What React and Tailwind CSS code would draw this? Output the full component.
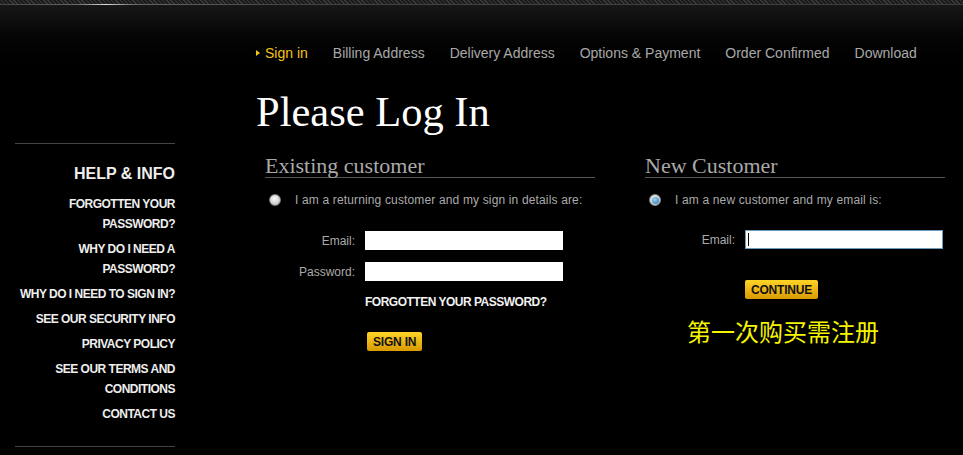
import React from 'react';

const steps = ['Billing Address', 'Delivery Address', 'Options & Payment', 'Order Confirmed', 'Download'];

const helpLinks = [
  'FORGOTTEN YOUR PASSWORD?',
  'WHY DO I NEED A PASSWORD?',
  'WHY DO I NEED TO SIGN IN?',
  'SEE OUR SECURITY INFO',
  'PRIVACY POLICY',
  'SEE OUR TERMS AND CONDITIONS',
  'CONTACT US',
];

const serif = "font-['Liberation_Serif','Times_New_Roman',serif]";

const Radio = ({ checked }) =>
  checked ? (
    <span className="w-[12px] h-[12px] rounded-full bg-[radial-gradient(circle_at_50%_40%,#f4f4f4,#bbb)] border border-[#888] flex items-center justify-center">
      <span className="w-[7px] h-[7px] rounded-full bg-[radial-gradient(circle_at_40%_35%,#9cd3f5,#1f6fb0)]" />
    </span>
  ) : (
    <span className="w-[12px] h-[12px] rounded-full bg-[radial-gradient(circle_at_45%_35%,#fafafa,#b5b5b5)] border border-[#777]" />
  );

const GoldButton = ({ children, className = '' }) => (
  <button className={`h-[19px] px-[6px] rounded-[2px] bg-gradient-to-b from-[#ffd426] to-[#d89a00] text-[#111] font-bold text-[12px] tracking-[-0.2px] leading-none ${className}`}>
    {children}
  </button>
);

const Field = ({ label, focused }) => (
  <div className="flex items-center">
    <label className="w-[100px] pr-[10px] text-right text-[12px] text-[#aaa]">{label}</label>
    <div className={`w-[198px] h-[19px] bg-white flex items-center ${focused ? 'border border-[#6a9cbf]' : ''}`}>
      {focused && <span className="ml-[2px] w-[1px] h-[13px] bg-black" />}
    </div>
  </div>
);

export default function App() {
  return (
    <div className="w-full h-[455px] bg-black overflow-hidden font-['Liberation_Sans',Arial,sans-serif]">
      <div className="h-[4px] bg-[repeating-linear-gradient(45deg,#3a3a3a_0px,#3a3a3a_1px,#1c1c1c_1px,#1c1c1c_3px)]" />
      <div className="h-[1px] bg-[linear-gradient(90deg,#444_0%,#666_8%,#ddd_11%,#666_14%,#444_30%,#3c3c3c_100%)]" />
      <div className="h-[75px] bg-gradient-to-b from-[#171717] to-black pt-[38px] pl-[256px]">
        <nav className="flex items-center gap-[25px] text-[14px] leading-[20px] text-[#a8a8a8]">
          <span className="flex items-center text-[#f5c518]">
            <span className="w-0 h-0 border-y-[3px] border-y-transparent border-l-[4px] border-l-[#f5c518] mr-[5px]" />
            Sign in
          </span>
          {steps.map((s) => (
            <span key={s}>{s}</span>
          ))}
        </nav>
      </div>

      <div className="flex">
        <aside className="w-[175px] pl-[15px] shrink-0 pt-[63px]">
          <div className="border-t border-[#444] pt-[20px] text-right text-[#eee]">
            <h3 className="font-bold text-[16px] leading-[20px]">HELP &amp; INFO</h3>
            <ul className="mt-[10px] flex flex-col gap-[5px] text-[12px] leading-[20px] font-bold tracking-[-0.5px]">
              {helpLinks.map((l) => (
                <li key={l}>{l}</li>
              ))}
            </ul>
            <div className="mt-[22px] border-t border-[#444]" />
          </div>
        </aside>

        <main className="ml-[81px] flex-1">
          <h1 className={`${serif} text-white text-[42.5px] leading-[43px] mt-[10px]`}>Please Log In</h1>

          <div className="flex gap-[50px] mt-[22px] pl-[9px]">
            <section className="w-[330px]">
              <h2 className={`${serif} text-[22px] leading-[22px] text-[#a9a9a9] border-b border-[#555]`}>Existing customer</h2>
              <div className="flex items-center h-[16px] mt-[14px] pl-[4px]">
                <Radio />
                <span className="ml-[14px] text-[12px] text-[#aaa] tracking-[0.15px]">I am a returning customer and my sign in details are:</span>
              </div>
              <div className="mt-[23px] flex flex-col gap-[12px]">
                <Field label="Email:" />
                <Field label="Password:" />
              </div>
              <p className="ml-[100px] mt-[13px] text-[12px] leading-[16px] font-bold text-[#f2f2f2] tracking-[-0.5px]">FORGOTTEN YOUR PASSWORD?</p>
              <GoldButton className="ml-[102px] mt-[22px]">SIGN IN</GoldButton>
            </section>

            <section className="w-[300px]">
              <h2 className={`${serif} text-[22px] leading-[22px] text-[#a9a9a9] border-b border-[#555]`}>New Customer</h2>
              <div className="flex items-center h-[16px] mt-[14px] pl-[4px]">
                <Radio checked />
                <span className="ml-[14px] text-[12px] text-[#aaa] tracking-[0.15px]">I am a new customer and my email is:</span>
              </div>
              <div className="mt-[22px]">
                <Field label="Email:" focused />
              </div>
              <GoldButton className="ml-[100px] mt-[31px]">CONTINUE</GoldButton>
              <p className="ml-[42px] mt-[14px] text-[24px] leading-[32px] text-[#f5f500] font-['Noto_Sans_CJK_SC',sans-serif]">第一次购买需注册</p>
            </section>
          </div>
        </main>
      </div>
    </div>
  );
}
